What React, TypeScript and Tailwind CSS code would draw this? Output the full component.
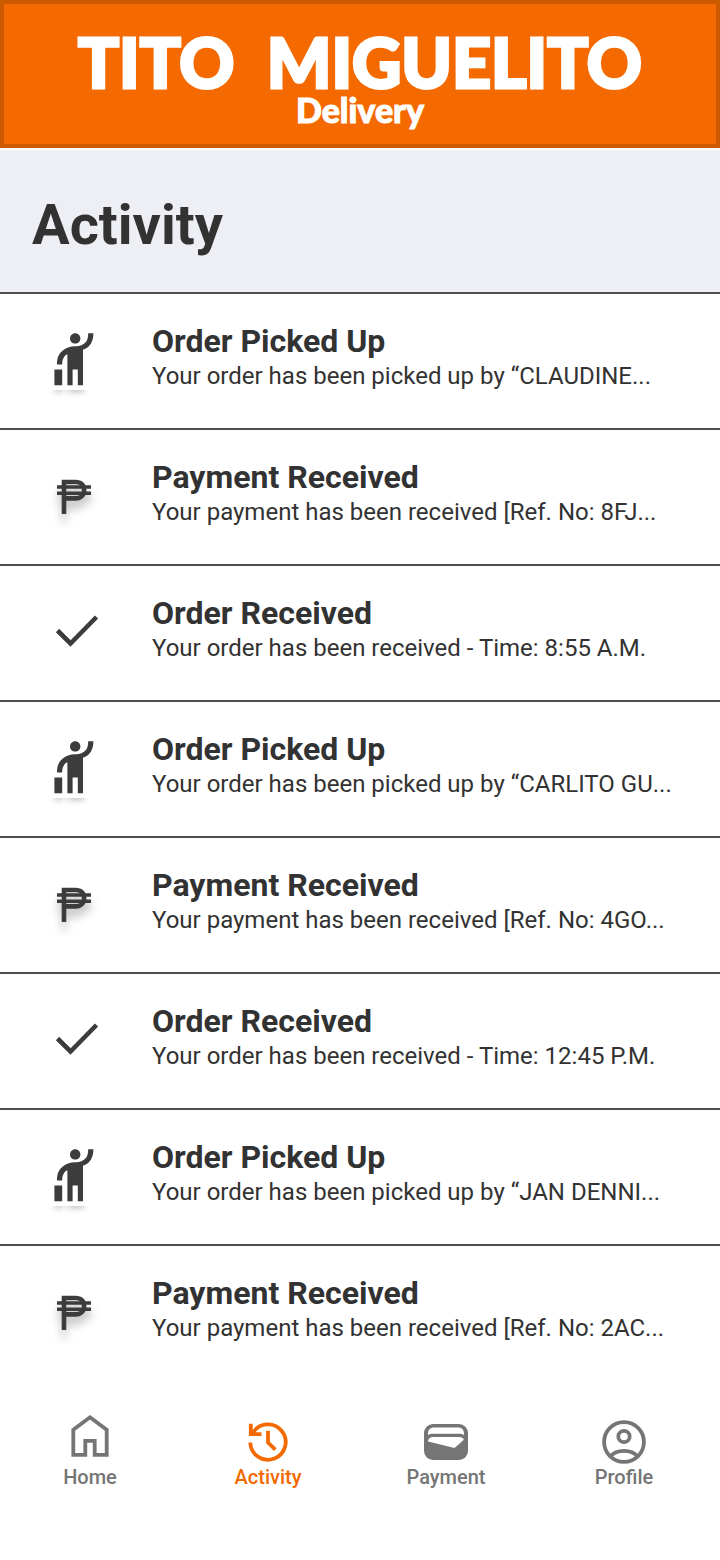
type Kind = "picked" | "payment" | "received";

const activities: { kind: Kind; title: string; detail: string }[] = [
  { kind: "picked", title: "Order Picked Up", detail: "Your order has been picked up by “CLAUDINE..." },
  { kind: "payment", title: "Payment Received", detail: "Your payment has been received [Ref. No: 8FJ..." },
  { kind: "received", title: "Order Received", detail: "Your order has been received - Time: 8:55 A.M." },
  { kind: "picked", title: "Order Picked Up", detail: "Your order has been picked up by “CARLITO GU..." },
  { kind: "payment", title: "Payment Received", detail: "Your payment has been received [Ref. No: 4GO..." },
  { kind: "received", title: "Order Received", detail: "Your order has been received - Time: 12:45 P.M." },
  { kind: "picked", title: "Order Picked Up", detail: "Your order has been picked up by “JAN DENNI..." },
  { kind: "payment", title: "Payment Received", detail: "Your payment has been received [Ref. No: 2AC..." },
];

function HailIcon() {
  return (
    <svg viewBox="0 0 64 80" className="h-20 w-16" aria-hidden="true">
      <defs>
        <filter id="hail-blur" x="-50%" y="-100%" width="200%" height="300%">
          <feGaussianBlur stdDeviation="3" />
        </filter>
        <clipPath id="hail-clip">
          <rect x="0" y="68" width="64" height="12" />
        </clipPath>
      </defs>
      <g clipPath="url(#hail-clip)">
        <path d="M10.500 58h8v12h-8zM24 56h16v14H24z" fill="#000" opacity=".25" filter="url(#hail-blur)" />
      </g>
      <g transform="translate(0 6) scale(2.6)" fill="#3c3c3c">
        <path d="M12 6c-1.1 0-2-.9-2-2s.9-2 2-2 2 .9 2 2-.9 2-2 2zM17 2h2c0 2.7-.93 4.41-2.3 5.5-.5.4-1.1.7-1.7.9V22h-2v-6h-2v6H9V10.1c-.3.1-.5.2-.6.3C7.9 10.81 7 11.79 7 14H5c0-2.06.35-3.78 2.11-5.29C8.21 7.81 10 7 12 7s2.68-.46 3.48-1.06C15.96 5.55 17 4.76 17 2zM4 16h3v6H4z" />
      </g>
    </svg>
  );
}

function PesoIcon() {
  return (
    <svg viewBox="0 0 64 80" className="h-20 w-16 drop-shadow-[0_8px_4px_rgba(0,0,0,0.25)]" aria-hidden="true">
      <g fill="none" stroke="#3c3c3c">
        <path d="M20 56V24H31.500c5.400 0 8.600 3.200 8.600 8.200s-3.200 8.200-8.600 8.200H20" strokeWidth="4.6" />
        <path d="M13 29H47M13 35.300H47" strokeWidth="3.6" />
      </g>
    </svg>
  );
}

function CheckIcon() {
  return (
    <svg viewBox="0 0 64 80" className="h-20 w-16" aria-hidden="true">
      <path d="M13.500 36.500l13 13 26-26.500" fill="none" stroke="#3c3c3c" strokeWidth="4.6" />
    </svg>
  );
}

function KindIcon({ kind }: { kind: Kind }) {
  if (kind === "picked") return <HailIcon />;
  if (kind === "payment") return <PesoIcon />;
  return <CheckIcon />;
}

const icon = "h-12 w-12 overflow-visible";

function HomeIcon() {
  return (
    <svg viewBox="0 0 48 48" className={icon} fill="none" stroke="currentColor" strokeWidth="3.8" aria-hidden="true">
      <path d="M7.300 38.900V13.800L24 1.300l16.700 12.500v25.100H28.700V24.800h-9.400v14.100z" />
    </svg>
  );
}

function HistoryIcon() {
  return (
    <svg viewBox="0 0 48 48" className={icon} fill="none" stroke="currentColor" strokeWidth="3.8" aria-hidden="true">
      <path d="M6.300 26.500A17.700 17.700 0 1 0 8.500 17.500" />
      <path d="M6.800 7.800V18.200H17.500" />
      <path d="M24 14.800V26.500l7.300 7.200" />
    </svg>
  );
}

function WalletIcon() {
  return (
    <svg viewBox="0 0 48 48" className={icon} aria-hidden="true">
      <rect x="2" y="8" width="44" height="36" rx="9" fill="currentColor" />
      <path d="M6 19v-1.500c0-4 2.600-6 6-6h24c3.400 0 6 2 6 6V19c-1.300-.9-3-1.300-5-1.300H11c-2 0-3.700.4-5 1.300z" fill="#fff" />
      <path d="M6 25.500c0-3 2-4.500 5-4.500h26c2.500 0 4.300 1 4.800 2.800L33.500 31.300c-.6.500-1.300.6-2 .4z" fill="#fff" />
    </svg>
  );
}

function ProfileIcon() {
  return (
    <svg viewBox="0 0 48 48" className={icon} fill="none" stroke="currentColor" strokeWidth="3.8" aria-hidden="true">
      <circle cx="24" cy="26" r="19.900" />
      <circle cx="24" cy="20.500" r="5.700" />
      <path d="M10.500 40.500c3.200-4 8-5.600 13.500-5.600s10.300 1.600 13.500 5.600" />
    </svg>
  );
}

const tabs = [
  { label: "Home", Icon: HomeIcon, active: false },
  { label: "Activity", Icon: HistoryIcon, active: true },
  { label: "Payment", Icon: WalletIcon, active: false },
  { label: "Profile", Icon: ProfileIcon, active: false },
];

export default function App() {
  return (
    <div className="min-h-screen bg-white font-['Roboto',sans-serif] text-[#323232]">
      <header className="flex flex-col items-center border-4 border-[#cb5900] bg-[#f46a00] pt-6 pb-[22px] text-center font-['Lato',sans-serif] font-black text-white">
        <p className="text-[68px] leading-[68px] whitespace-pre [-webkit-text-stroke:3px_white] [stroke-linejoin:round]">TITO  MIGUELITO</p>
        <p className="mt-0.5 text-[34px] leading-6 [-webkit-text-stroke:1px_white]">Delivery</p>
      </header>

      <main className="mt-0.5">
        <div className="bg-[#eeeff4] px-8 pt-[42px] pb-[34px]">
          <h1 className="text-[56px] leading-[66px] font-bold">Activity</h1>
        </div>
        <ul>
          {activities.map((item, i) => (
            <li key={i} className="flex h-34 items-start border-t-2 border-[#4f4f4f] pt-7">
              <div className="ml-11 w-27 shrink-0">
                <KindIcon kind={item.kind} />
              </div>
              <div className="min-w-0 flex-1">
                <h2 className="text-[32px] leading-[38px] font-bold">{item.title}</h2>
                <p className="truncate text-2xl leading-8">{item.detail}</p>
              </div>
            </li>
          ))}
        </ul>
      </main>

      <nav aria-label="Main" className="mt-9 grid grid-cols-4 pr-[7px] pb-16 pl-px">
        {tabs.map(({ label, Icon, active }) => (
          <a
            key={label}
            href="#"
            aria-current={active ? "page" : undefined}
            className={`flex flex-col items-center gap-px text-xl leading-6 font-medium ${active ? "text-[#f46a00]" : "text-[#757575]"}`}
          >
            <Icon />
            {label}
          </a>
        ))}
      </nav>
    </div>
  );
}
